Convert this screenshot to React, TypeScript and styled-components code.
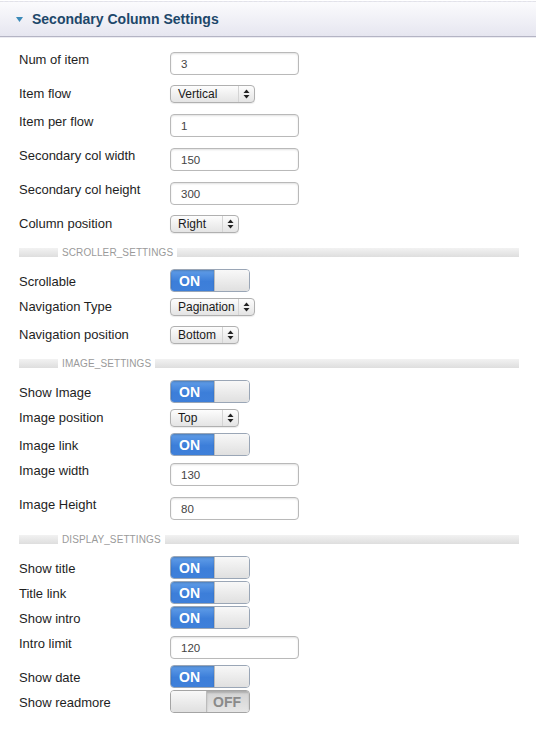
import React from "react";
import styled, { createGlobalStyle } from "styled-components";

const Global = createGlobalStyle`
  html, body { margin: 0; padding: 0; background: #fff; }
  body { font-family: "Liberation Sans", Arial, sans-serif; color: #222; }
`;

const Page = styled.div`
  width: 536px;
  background: #fff;
`;

const Header = styled.div`
  height: 34px;
  border-top: 1px dashed #e2e2e8;
  margin-top: 1px;
  border-bottom: 1px solid #b4b4c4;
  box-shadow: 0 1px 0 #ececf2;
  background: linear-gradient(#fbfbfd, #e6e6f0);
  display: flex;
  align-items: center;
  padding-left: 16px;
  gap: 9px;
`;

const Title = styled.h2`
  margin: 0;
  font-size: 14px;
  font-weight: bold;
  color: #1d476a;
  letter-spacing: 0;
`;

const Body = styled.div`
  padding: 10px 17px 0 19px;
  display: flex;
  flex-direction: column;
`;

const Row = styled.div<{ $h: number }>`
  height: ${(p) => p.$h}px;
  display: grid;
  grid-template-columns: 151px 1fr;
  align-items: start;
`;

const Label = styled.div`
  font-size: 13px;
  line-height: 16px;
  padding-top: 5px;
  color: #1e1e1e;
`;

const TextInput = styled.div`
  margin-top: 5px;
  width: 129px;
  height: 23px;
  box-sizing: border-box;
  border: 1px solid #b9b9b9;
  border-radius: 4px;
  box-shadow: inset 0 1px 2px rgba(0, 0, 0, 0.12);
  background: #fff;
  font-size: 11.5px;
  color: #444;
  padding-left: 10px;
  display: flex;
  align-items: center;
`;

const Select = styled.div<{ $w: number }>`
  margin-top: 4px;
  width: ${(p) => p.$w}px;
  height: 18px;
  box-sizing: border-box;
  border: 1px solid #b0b0b0;
  border-radius: 4px;
  background: linear-gradient(#fdfdfd, #e4e4e4);
  box-shadow: 0 1px 1px rgba(0, 0, 0, 0.08);
  display: flex;
  align-items: center;
  font-size: 12px;
  color: #1a1a1a;
`;

const SelectText = styled.span`
  flex: 1;
  padding-left: 7px;
`;

const SelectArrow = styled.span`
  width: 15px;
  height: 100%;
  border-left: 1px solid #d4d4d4;
  display: flex;
  align-items: center;
  justify-content: center;
`;

const Toggle = styled.div<{ $on: boolean }>`
  width: 80px;
  height: 23px;
  box-sizing: border-box;
  border-radius: 4px;
  overflow: hidden;
  display: flex;
  border: 1px solid ${(p) => (p.$on ? "#9aa6b6" : "#a4a4a4")};
`;

const OnPart = styled.div`
  width: 45px;
  background: linear-gradient(#619ee8, #3c7ed9 55%, #3f80da);
  color: #fff;
  font-weight: bold;
  font-size: 14px;
  display: flex;
  align-items: center;
  padding-left: 8px;
  box-sizing: border-box;
  box-shadow: inset 0 1px 2px rgba(0, 0, 0, 0.2);
`;

const Knob = styled.div<{ $w: number }>`
  width: ${(p) => p.$w}px;
  background: linear-gradient(#f8f8f8, #e0e0e0);
  border-left: 1px solid #bcbcbc;
  border-right: 1px solid #bcbcbc;
  &:first-child { border-left: none; }
  &:last-child { border-right: none; }
`;

const OffPart = styled.div`
  flex: 1;
  background: linear-gradient(#d2d2d2, #e6e6e6);
  color: #8a8a8a;
  font-weight: bold;
  font-size: 14px;
  display: flex;
  align-items: center;
  padding-left: 6px;
  box-shadow: inset 0 2px 2px rgba(0, 0, 0, 0.18);
`;

const Section = styled.div`
  height: 30px;
  display: flex;
  align-items: center;
  padding-bottom: 4px;
  box-sizing: border-box;
`;

const Bar = styled.div<{ $w?: number }>`
  height: 9px;
  background: linear-gradient(#f2f2f2, #dedede);
  ${(p) => (p.$w ? `width: ${p.$w}px;` : "flex: 1;")}
`;

const SectionText = styled.span`
  font-size: 10px;
  color: #9a9a9a;
  padding: 0 4px;
  letter-spacing: 0.1px;
`;

const Arrows = () => (
  <svg width="7" height="10" viewBox="0 0 7 10">
    <path d="M3.5 0.5 L6.5 4 L0.5 4 Z" fill="#222" />
    <path d="M3.5 9.5 L6.5 6 L0.5 6 Z" fill="#222" />
  </svg>
);

type Item =
  | { kind: "input"; label: string; value: string }
  | { kind: "select"; label: string; value: string; w: number }
  | { kind: "toggle"; label: string; on: boolean }
  | { kind: "section"; title: string };

const items: Item[] = [
  { kind: "input", label: "Num of item", value: "3" },
  { kind: "select", label: "Item flow", value: "Vertical", w: 85 },
  { kind: "input", label: "Item per flow", value: "1" },
  { kind: "input", label: "Secondary col width", value: "150" },
  { kind: "input", label: "Secondary col height", value: "300" },
  { kind: "select", label: "Column position", value: "Right", w: 69 },
  { kind: "section", title: "SCROLLER_SETTINGS" },
  { kind: "toggle", label: "Scrollable", on: true },
  { kind: "select", label: "Navigation Type", value: "Pagination", w: 85 },
  { kind: "select", label: "Navigation position", value: "Bottom", w: 69 },
  { kind: "section", title: "IMAGE_SETTINGS" },
  { kind: "toggle", label: "Show Image", on: true },
  { kind: "select", label: "Image position", value: "Top", w: 69 },
  { kind: "toggle", label: "Image link", on: true },
  { kind: "input", label: "Image width", value: "130" },
  { kind: "input", label: "Image Height", value: "80" },
  { kind: "section", title: "DISPLAY_SETTINGS" },
  { kind: "toggle", label: "Show title", on: true },
  { kind: "toggle", label: "Title link", on: true },
  { kind: "toggle", label: "Show intro", on: true },
  { kind: "input", label: "Intro limit", value: "120" },
  { kind: "toggle", label: "Show date", on: true },
  { kind: "toggle", label: "Show readmore", on: false },
];

const heights = { input: 34, select: 28, toggle: 25 };

export default function App() {
  return (
    <Page>
      <Global />
      <Header>
        <svg width="7" height="5" viewBox="0 0 7 5">
          <path d="M0 0 L7 0 L3.5 5 Z" fill="#3b8ab8" />
        </svg>
        <Title>Secondary Column Settings</Title>
      </Header>
      <Body>
        {items.map((it, i) => {
          if (it.kind === "section") {
            return (
              <Section key={i}>
                <Bar $w={39} />
                <SectionText>{it.title}</SectionText>
                <Bar />
              </Section>
            );
          }
          return (
            <Row key={i} $h={heights[it.kind]}>
              <Label>{it.label}</Label>
              {it.kind === "input" && <TextInput>{it.value}</TextInput>}
              {it.kind === "select" && (
                <Select $w={it.w}>
                  <SelectText>{it.value}</SelectText>
                  <SelectArrow>
                    <Arrows />
                  </SelectArrow>
                </Select>
              )}
              {it.kind === "toggle" &&
                (it.on ? (
                  <Toggle $on>
                    <OnPart>ON</OnPart>
                    <Knob $w={35} />
                  </Toggle>
                ) : (
                  <Toggle $on={false}>
                    <Knob $w={35} />
                    <OffPart>OFF</OffPart>
                  </Toggle>
                ))}
            </Row>
          );
        })}
      </Body>
    </Page>
  );
}
